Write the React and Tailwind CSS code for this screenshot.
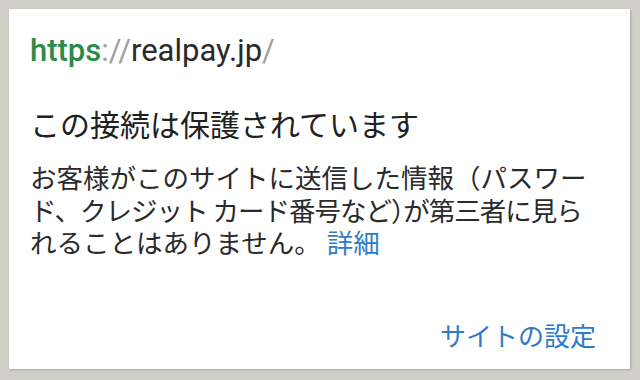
import React from 'react';

export default function App() {
  return (
    <div className="w-[640px] h-[380px] bg-[#cfcfc8] pt-[9px] pl-[9px]">
      <div className="w-[621px] h-[360px] bg-white shadow-[1px_1px_2px_rgba(0,0,0,0.18)] pt-[24px] pl-[21px] pr-[21px] flex flex-col">
        {/* URL */}
        <div className="font-['Roboto',sans-serif] text-[31px] leading-[36px] text-[#2a2a2a]">
          <span className="text-[#2e8b47] font-medium">https</span>
          <span className="text-[#a0a0a0]">://</span>
          <span>realpay.jp</span>
          <span className="text-[#a0a0a0]">/</span>
        </div>

        {/* Heading */}
        <div className="mt-[36px] text-[30px] leading-[36px] text-[#212121] font-['Noto_Sans_CJK_JP',sans-serif]">
          この接続は保護されています
        </div>

        {/* Body */}
        <div className="mt-[20px] text-[26.5px] leading-[32.5px] text-[#2a2a2a] font-['Noto_Sans_CJK_JP',sans-serif] whitespace-nowrap">
          <div>お客様がこのサイトに送信した情報（パスワー</div>
          <div className="tracking-[-1px]">
            ド、クレジット カード番号など<span className="[font-feature-settings:'halt']">）</span>が第三者に見ら
          </div>
          <div>
            れることはありません。 <span className="text-[#2f7bc6]">詳細</span>
          </div>
        </div>

        {/* Action */}
        <div className="mt-auto mb-[18px] flex justify-end pr-[13px]">
          <span className="text-[26px] leading-[32px] text-[#2f7bc6] font-['Noto_Sans_CJK_JP',sans-serif]">
            サイトの設定
          </span>
        </div>
      </div>
    </div>
  );
}
